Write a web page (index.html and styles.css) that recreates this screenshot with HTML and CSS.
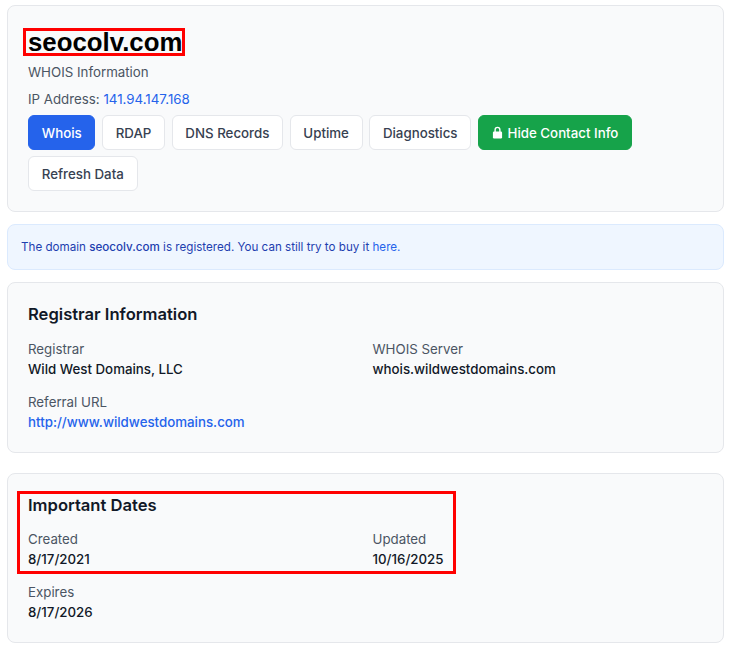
FILE: index.html
```html
<!DOCTYPE html>
<html lang="en">

<head>
    <meta charset="UTF-8">
    <meta name="viewport" content="width=device-width, initial-scale=1.0">
    <title>seocolv.com WHOIS Information</title>
    <link rel="stylesheet" href="styles.css">
</head>

<body>
    <div class="card header-card">
        <h1><span class="marked">seocolv.com</span></h1>
        <p class="subtitle">WHOIS Information</p>
        <p class="ip">IP Address: <a href="#">141.94.147.168</a></p>
        <div class="actions">
            <a href="#" class="btn btn-primary">Whois</a>
            <a href="#" class="btn">RDAP</a>
            <a href="#" class="btn">DNS Records</a>
            <a href="#" class="btn">Uptime</a>
            <a href="#" class="btn">Diagnostics</a>
            <a href="#" class="btn btn-success">
                <svg class="lock" viewBox="0 0 12 14" width="11" height="13" aria-hidden="true">
                    <path d="M3.4 6.5V4a2.6 2.6 0 0 1 5.2 0v2.5" fill="none" stroke="currentColor" stroke-width="1.5"/>
                    <rect x="1" y="6" width="10" height="7.6" rx="1.3" fill="currentColor"/>
                </svg>
                Hide Contact Info
            </a>
            <a href="#" class="btn">Refresh Data</a>
        </div>
    </div>

    <div class="notice">
        The domain <strong>seocolv.com</strong> is registered. You can still try to buy it <a href="#">here.</a>
    </div>

    <div class="card section">
        <h2>Registrar Information</h2>
        <div class="fields">
            <div class="field">
                <div class="label">Registrar</div>
                <div class="value">Wild West Domains, LLC</div>
            </div>
            <div class="field">
                <div class="label">WHOIS Server</div>
                <div class="value">whois.wildwestdomains.com</div>
            </div>
            <div class="field">
                <div class="label">Referral URL</div>
                <div class="value"><a href="#">http://www.wildwestdomains.com</a></div>
            </div>
        </div>
    </div>

    <div class="card section dates">
        <div class="highlight"></div>
        <h2>Important Dates</h2>
        <div class="fields">
            <div class="field">
                <div class="label">Created</div>
                <div class="value">8/17/2021</div>
            </div>
            <div class="field">
                <div class="label">Updated</div>
                <div class="value">10/16/2025</div>
            </div>
            <div class="field">
                <div class="label">Expires</div>
                <div class="value">8/17/2026</div>
            </div>
        </div>
    </div>
</body>

</html>
```

FILE: styles.css
```css
body {
    font-family: Inter, "Liberation Sans", sans-serif;
    font-size: 13.3px;
    line-height: 20px;
    margin: 0;
    padding: 5px 7px;
    background-color: #fff;
    color: #111827;
}

a {
    color: #2563eb;
    text-decoration: none;
}

.card {
    background-color: #f9fafb;
    border: 1px solid #e5e7eb;
    border-radius: 8px;
    padding: 20px;
}

.header-card {
    margin-bottom: 12px;
}

h1 {
    font-family: "Liberation Sans", Arial, sans-serif;
    font-size: 25.8px;
    line-height: 28px;
    font-weight: 700;
    margin: 2px 0 6px;
    color: #000;
}

.marked {
    display: inline-block;
    line-height: 24px;
    outline: 3px solid #f00;
    outline-offset: -1px;
    padding: 0 1px 0 3px;
    margin-left: -3px;
}

.subtitle,
.ip {
    margin: 0;
    color: #4b5563;
}

.subtitle {
    margin-bottom: 7px;
}

.actions {
    display: flex;
    flex-wrap: wrap;
    gap: 6px 6.4px;
    margin-top: 6px;
}

.btn {
    display: flex;
    align-items: center;
    gap: 5px;
    box-sizing: border-box;
    height: 35px;
    padding: 0 12.8px;
    background-color: #fff;
    border: 1px solid #e5e7eb;
    border-radius: 6px;
    color: #374151;
    font-weight: 500;
}

.btn-primary {
    background-color: #2563eb;
    border-color: #2563eb;
    color: #fff;
}

.btn-success {
    background-color: #16a34a;
    border-color: #16a34a;
    color: #fff;
}

.notice {
    background-color: #eff6ff;
    border: 1px solid #dbeafe;
    border-radius: 8px;
    padding: 13px;
    margin-bottom: 12px;
    font-size: 11.64px;
    line-height: 18px;
    color: #1e40af;
}

.notice strong {
    font-weight: 500;
}

.section {
    margin-bottom: 20.5px;
    padding-top: 19px;
    position: relative;
}

h2 {
    font-size: 16.6px;
    line-height: 24px;
    font-weight: 600;
    margin: 0 0 12.5px;
    color: #111827;
}

.dates h2 {
    margin-bottom: 11.5px;
}

.fields {
    display: grid;
    grid-template-columns: 1fr 1fr;
    gap: 13px 14px;
}

.label {
    color: #4b5563;
}

.value {
    font-weight: 500;
    color: #111827;
}

.value a {
    color: #2563eb;
}

.highlight {
    position: absolute;
    left: 9px;
    top: 17px;
    width: 433px;
    height: 77px;
    border: 3px solid #f00;
}
```
